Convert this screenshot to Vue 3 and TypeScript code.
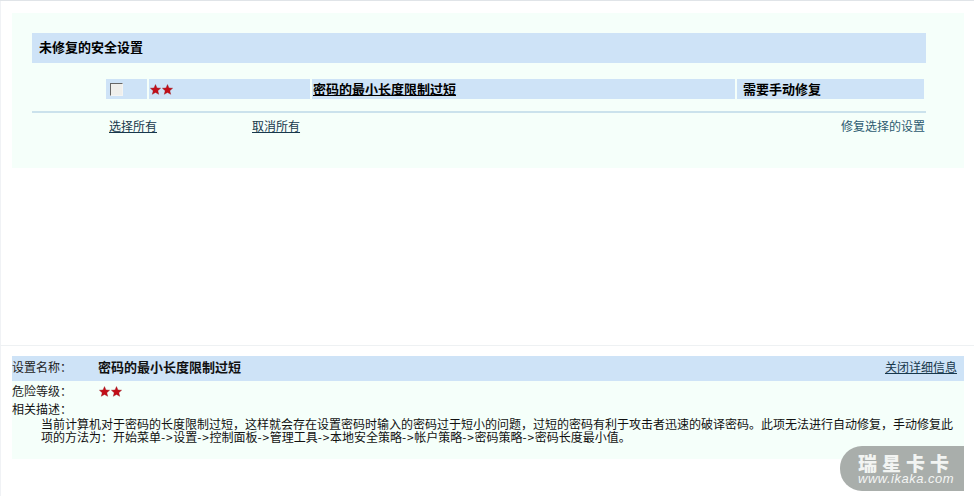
<template>
  <div class="page">
    <section class="panel">
      <h2 class="panel-title">未修复的安全设置</h2>
      <div class="row">
        <div class="cell cell-check"><span class="checkbox"></span></div>
        <div class="cell cell-stars">
          <svg v-for="n in 2" :key="n" class="star" viewBox="0 0 12 12"><path d="M6 .6 7.6 4.3 11.6 4.6 8.5 7.3 9.5 11.3 6 9.2 2.5 11.3 3.5 7.3.4 4.6 4.4 4.3Z" /></svg>
        </div>
        <div class="cell cell-name"><a class="name-link">密码的最小长度限制过短</a></div>
        <div class="cell cell-status">需要手动修复</div>
      </div>
      <div class="actions">
        <a class="link select-all">选择所有</a>
        <a class="link clear-all">取消所有</a>
        <span class="fix">修复选择的设置</span>
      </div>
    </section>

    <div class="divider"></div>

    <section class="detail">
      <div class="detail-head">
        <span class="label">设置名称&#xFF1A;</span>
        <strong class="detail-name">密码的最小长度限制过短</strong>
        <a class="link close">关闭详细信息</a>
      </div>
      <div class="risk">
        <span class="label">危险等级&#xFF1A;</span>
        <span class="risk-stars">
          <svg v-for="n in 2" :key="n" class="star" viewBox="0 0 12 12"><path d="M6 .6 7.6 4.3 11.6 4.6 8.5 7.3 9.5 11.3 6 9.2 2.5 11.3 3.5 7.3.4 4.6 4.4 4.3Z" /></svg>
        </span>
      </div>
      <div class="desc-label">相关描述&#xFF1A;</div>
      <p class="desc">
        {{ description }}<template v-for="(step, i) in steps" :key="step"><span v-if="i > 0" class="arrow">-&gt;</span>{{ step }}</template>
      </p>
    </section>

    <div class="watermark">
      <span class="wm-title">瑞星卡卡</span>
      <span class="wm-url">www.ikaka.com</span>
    </div>
  </div>
</template>

<script setup lang="ts">
const description =
  '当前计算机对于密码的长度限制过短\uFF0C这样就会存在设置密码时输入的密码过于短小的问题\uFF0C过短的密码有利于攻击者迅速的破译密码。此项无法进行自动修复\uFF0C手动修复此项的方法为\uFF1A';

const steps: string[] = [
  '开始菜单',
  '设置',
  '控制面板',
  '管理工具',
  '本地安全策略',
  '帐户策略',
  '密码策略',
  '密码长度最小值。',
];
</script>

<style>
html,
body {
  margin: 0;
  background: #fff;
}
</style>

<style scoped>
.page {
  position: relative;
  width: 974px;
  height: 496px;
  box-sizing: border-box;
  padding: 12px 10px 0 12px;
  border-top: 1px solid #e0e4e8;
  overflow: hidden;
  font: 12px/14px "Noto Sans CJK SC", "Liberation Sans", sans-serif;
  color: #111;
  background: linear-gradient(#f0f2f5, #f0f2f5) left top / 1px 100% no-repeat #fff;
}

.panel {
  height: 155px;
  box-sizing: border-box;
  padding: 20px 38px 0 20px;
  background: #f5fffa;
}

.panel-title {
  margin: 0;
  height: 30px;
  padding-left: 7px;
  font-size: 13px;
  font-weight: 700;
  line-height: 27px;
  color: #000;
  background: #cee3f7;
}

.row {
  display: flex;
  gap: 2px;
  height: 20px;
  margin: 16px 2px 0 74px;
  font-size: 13px;
  line-height: 18px;
}

.cell {
  display: flex;
  align-items: center;
  background: #cee3f7;
  font-weight: 700;
  color: #000;
}

.cell-check {
  width: 41px;
  padding-left: 4px;
  box-sizing: border-box;
}

.checkbox {
  width: 11px;
  height: 11px;
  border: 1px solid;
  border-color: #666 #f4f4f2 #f4f4f2 #666;
  background: #efefec;
}

.cell-stars {
  width: 161px;
  padding-left: 1px;
  box-sizing: border-box;
  gap: 1px;
}

.star {
  width: 11px;
  height: 11px;
  fill: #c40d18;
  stroke: #8c1016;
  stroke-width: 0.4;
}

.cell-name {
  width: 423px;
  padding-left: 1px;
  box-sizing: border-box;
}

.name-link {
  color: #000;
  text-decoration: underline;
}

.cell-status {
  width: 187px;
  padding-left: 6px;
  box-sizing: border-box;
}

.actions {
  display: flex;
  align-items: center;
  height: 27px;
  margin-top: 12px;
  box-sizing: border-box;
  border-top: 2px solid #cbe2ec;
}

.link {
  color: #17384c;
  text-decoration: underline;
}

.select-all {
  margin-left: 77px;
}

.clear-all {
  margin-left: 95px;
}

.fix {
  margin-left: auto;
  margin-right: 1px;
  color: #2c5a70;
}

.divider {
  height: 1px;
  margin: 177px -10px 0 -12px;
  background: #eef1f3;
}

.detail {
  height: 103px;
  margin-top: 10px;
  background: #f5fffa;
}

.detail-head {
  display: flex;
  align-items: center;
  height: 25px;
  box-sizing: border-box;
  padding: 0 7px 3px 0;
  background: #cee3f7;
}

.label {
  width: 86px;
  flex: none;
  color: #222;
}

.detail-name {
  font-size: 13px;
  font-weight: 700;
  color: #111;
}

.close {
  margin-left: auto;
}

.risk {
  display: flex;
  align-items: center;
  height: 20px;
}

.risk-stars {
  display: flex;
  gap: 1px;
  margin-left: 1px;
}

.desc-label {
  height: 10px;
  padding-top: 1px;
  line-height: 14px;
}

.desc {
  margin: 0 0 0 29px;
  padding-top: 5px;
  width: 915px;
  line-height: 13px;
}

.arrow {
  letter-spacing: 0.7px;
}

.watermark {
  position: absolute;
  left: 840px;
  top: 445px;
  width: 124px;
  height: 45px;
  box-sizing: border-box;
  padding: 7px 0 0 18px;
  border-radius: 22px 0 0 22px;
  background: #a9aeab;
  display: flex;
  flex-direction: column;
}

.wm-title {
  height: 19px;
  font-size: 19px;
  line-height: 19px;
  font-weight: 900;
  letter-spacing: 5px;
  white-space: nowrap;
  color: #f2f4f2;
}

.wm-url {
  font: italic 13px/13px "Liberation Sans", sans-serif;
  letter-spacing: 0.5px;
  color: #f4f5f4;
}
</style>
